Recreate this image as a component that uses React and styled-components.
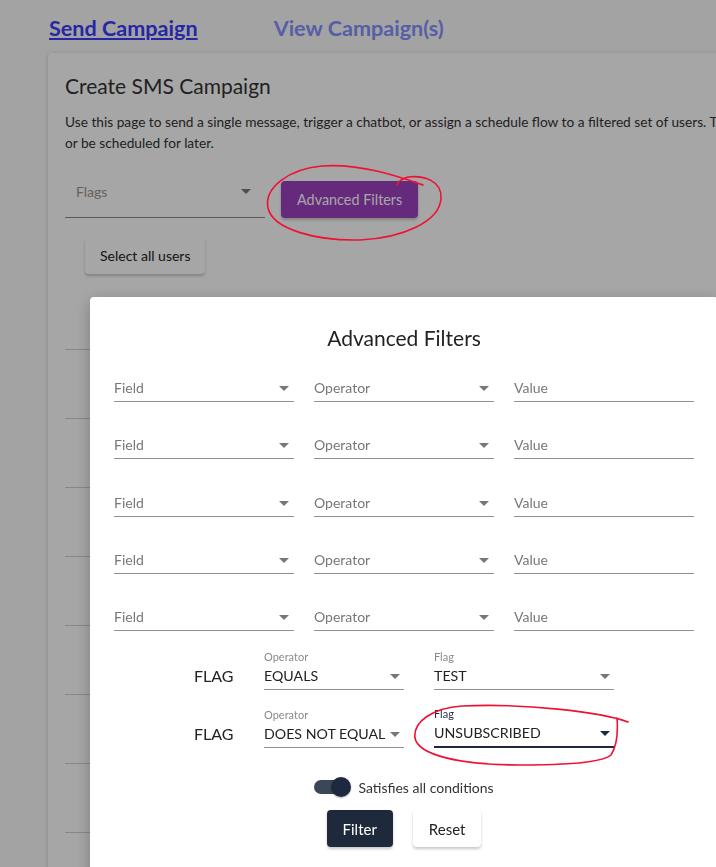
import React from "react";
import styled, { createGlobalStyle } from "styled-components";

const GlobalStyle = createGlobalStyle`
  html, body {
    margin: 0;
    padding: 0;
    height: 100%;
    overflow: hidden;
  }
  body {
    background: #fafafa;
    font-family: Lato, "Open Sans", sans-serif;
  }
`;

const Page = styled.div`
  width: 1000px;
  padding: 14px 0 0 48px;
`;

const Nav = styled.nav`
  display: flex;
  gap: 76px;
  padding-left: 1px;
`;

const NavLink = styled.a`
  font-size: 21.6px;
  line-height: 28px;
  font-weight: 700;
  color: ${(p) => (p.active ? "#3d3dff" : "#8592ff")};
  text-decoration: ${(p) => (p.active ? "underline" : "none")};
  text-underline-offset: 2px;
`;

const Card = styled.section`
  margin-top: 11px;
  background: #fff;
  border-radius: 4px;
  box-shadow: 0 1px 4px rgba(0, 0, 0, 0.18);
  padding: 18px 17px 0;
  height: 900px;
`;

const CardTitle = styled.h2`
  margin: 0 0 10px;
  font-size: 21px;
  line-height: 30px;
  font-weight: 400;
  color: #333;
`;

const Description = styled.p`
  margin: 0;
  font-size: 13.7px;
  line-height: 21px;
  color: #333;
  white-space: nowrap;
`;

const Controls = styled.div`
  display: flex;
  align-items: flex-end;
  gap: 16px;
  margin-top: 28px;
`;

const FlagsSelect = styled.div`
  box-sizing: border-box;
  width: 200px;
  height: 37px;
  padding: 3px 14px 0 11px;
  display: flex;
  justify-content: space-between;
  border-bottom: 1px solid #8c8c8c;
  font-size: 14px;
  line-height: 16px;
  color: #9d958d;
`;

const Arrow = styled.span`
  width: 0;
  height: 0;
  flex-shrink: 0;
  margin-top: ${(p) => p.top || 6}px;
  margin-right: ${(p) => p.right || 0}px;
  border-left: 5px solid transparent;
  border-right: 5px solid transparent;
  border-top: 5px solid ${(p) => (p.dark ? "#1e2940" : "#777")};
`;

const Button = styled.button`
  box-sizing: border-box;
  height: 37px;
  padding: 0 ${(p) => p.pad || 16}px;
  border: none;
  border-radius: 4px;
  font-family: inherit;
  font-size: ${(p) => p.size || 15}px;
  cursor: pointer;
  background: ${(p) => p.bg || "#fff"};
  color: ${(p) => p.fg || "#222"};
  box-shadow: 0 2px 3px rgba(0, 0, 0, 0.22);
`;

const SelectAll = styled(Button)`
  margin: 19px 0 0 20px;
`;

const Table = styled.div`
  margin-top: 7px;
`;

const TableRow = styled.div`
  box-sizing: border-box;
  height: 69px;
  border-bottom: 1px solid #d0d0d0;
`;

const Overlay = styled.div`
  position: fixed;
  inset: 0;
  background: rgba(0, 0, 0, 0.35);
`;

const Modal = styled.div`
  position: fixed;
  left: 90px;
  top: 297px;
  width: 628px;
  bottom: -20px;
  box-sizing: border-box;
  padding: 24px;
  background: #fff;
  border-radius: 4px;
  box-shadow: 0 4px 16px rgba(0, 0, 0, 0.25);
`;

const ModalTitle = styled.h3`
  margin: 0 0 15px;
  text-align: center;
  font-size: 21px;
  line-height: 34px;
  font-weight: 400;
  color: #222;
`;

const FieldGrid = styled.div`
  display: grid;
  grid-template-columns: repeat(3, 180px);
  column-gap: 20px;
  row-gap: 25.25px;
`;

const Field = styled.div`
  box-sizing: border-box;
  height: 32px;
  padding: 10px 5px 0 0;
  display: flex;
  justify-content: space-between;
  border-bottom: 1px solid #8f8f8f;
  font-size: 14px;
  line-height: 16px;
  color: #777;
`;

const FlagRows = styled.div`
  margin-top: 19px;
  display: flex;
  flex-direction: column;
  gap: 17px;
`;

const FlagRow = styled.div`
  display: flex;
  justify-content: center;
  align-items: flex-end;
  gap: 30px;
`;

const FlagName = styled.span`
  width: 40px;
  padding-bottom: 6px;
  font-size: 16px;
  line-height: 16px;
  color: #222;
`;

const FlagSelect = styled.div`
  width: ${(p) => p.width}px;
`;

const SmallLabel = styled.div`
  font-size: 11px;
  line-height: 13px;
  color: ${(p) => (p.focused ? "#1e2940" : "#8a8a8a")};
`;

const FlagValue = styled.div`
  display: flex;
  justify-content: space-between;
  padding: 5px 0;
  font-size: 14.2px;
  line-height: 16px;
  color: #222;
  white-space: nowrap;
  border-bottom: ${(p) => (p.focused ? "2px solid #1e2940" : "1px solid #8f8f8f")};
`;

const ToggleRow = styled.div`
  margin-top: 28px;
  display: flex;
  justify-content: center;
  align-items: center;
  gap: 8px;
  height: 22px;
`;

const Track = styled.span`
  position: relative;
  width: 36px;
  height: 14px;
  border-radius: 7px;
  background: #3c4659;
`;

const Thumb = styled.span`
  position: absolute;
  right: -1px;
  top: -3px;
  width: 20px;
  height: 20px;
  border-radius: 50%;
  background: #1e2940;
  box-shadow: 0 1px 2px rgba(0, 0, 0, 0.3);
`;

const ToggleText = styled.span`
  font-size: 14px;
  color: #333;
`;

const ButtonRow = styled.div`
  margin-top: 12px;
  display: flex;
  justify-content: center;
  gap: 20px;
`;

const Annotations = styled.svg`
  position: fixed;
  inset: 0;
  width: 716px;
  height: 867px;
  pointer-events: none;
`;

const fieldRows = [0, 1, 2, 3, 4];

export default function App() {
  return (
    <>
      <GlobalStyle />
      <Page>
        <Nav>
          <NavLink active>Send Campaign</NavLink>
          <NavLink>View Campaign(s)</NavLink>
        </Nav>
        <Card>
          <CardTitle>Create SMS Campaign</CardTitle>
          <Description>
            Use this page to send a single message, trigger a chatbot, or assign a schedule flow to a
            filtered set of users. These messages can be sent immediately
            <br />
            or be scheduled for later.
          </Description>
          <Controls>
            <FlagsSelect>
              Flags
              <Arrow top={5} />
            </FlagsSelect>
            <Button bg="#9c41bf" fg="#fff" size={14.4}>
              Advanced Filters
            </Button>
          </Controls>
          <SelectAll size={14} pad={15}>
            Select all users
          </SelectAll>
          <Table>
            {[0, 1, 2, 3, 4, 5, 6, 7, 8].map((i) => (
              <TableRow key={i} />
            ))}
          </Table>
        </Card>
      </Page>

      <Overlay />

      <Modal>
        <ModalTitle>Advanced Filters</ModalTitle>
        <FieldGrid>
          {fieldRows.map((i) => (
            <React.Fragment key={i}>
              <Field>
                Field
                <Arrow />
              </Field>
              <Field>
                Operator
                <Arrow />
              </Field>
              <Field>Value</Field>
            </React.Fragment>
          ))}
        </FieldGrid>

        <FlagRows>
          <FlagRow>
            <FlagName>FLAG</FlagName>
            <FlagSelect width={140}>
              <SmallLabel>Operator</SmallLabel>
              <FlagValue>
                EQUALS
                <Arrow right={4} />
              </FlagValue>
            </FlagSelect>
            <FlagSelect width={180}>
              <SmallLabel>Flag</SmallLabel>
              <FlagValue>
                TEST
                <Arrow right={4} />
              </FlagValue>
            </FlagSelect>
          </FlagRow>
          <FlagRow>
            <FlagName>FLAG</FlagName>
            <FlagSelect width={140}>
              <SmallLabel>Operator</SmallLabel>
              <FlagValue>
                DOES NOT EQUAL
                <Arrow right={4} />
              </FlagValue>
            </FlagSelect>
            <FlagSelect width={180}>
              <SmallLabel focused>Flag</SmallLabel>
              <FlagValue focused>
                UNSUBSCRIBED
                <Arrow right={4} dark />
              </FlagValue>
            </FlagSelect>
          </FlagRow>
        </FlagRows>

        <ToggleRow>
          <Track>
            <Thumb />
          </Track>
          <ToggleText>Satisfies all conditions</ToggleText>
        </ToggleRow>

        <ButtonRow>
          <Button bg="#1e293b" fg="#fff">
            Filter
          </Button>
          <Button>Reset</Button>
        </ButtonRow>
      </Modal>

      <Annotations viewBox="0 0 716 867">
        <g fill="none" stroke="#ee1133" strokeWidth="1.6" strokeLinecap="round">
          <path d="M423 185 C400 177, 360 163, 322 166 C288 169, 264 188, 268 208 C273 230, 318 241, 360 240 C402 238, 440 222, 441 198 C442 181, 424 175, 408 177 C401 179, 398 182, 397 185" />
          <path d="M628 722 C602 712, 522 703, 462 706 C432 708, 413 722, 415 738 C418 755, 460 765, 520 765 C570 765, 603 762, 611 755 C617 746, 618 731, 617 718" />
        </g>
      </Annotations>
    </>
  );
}
